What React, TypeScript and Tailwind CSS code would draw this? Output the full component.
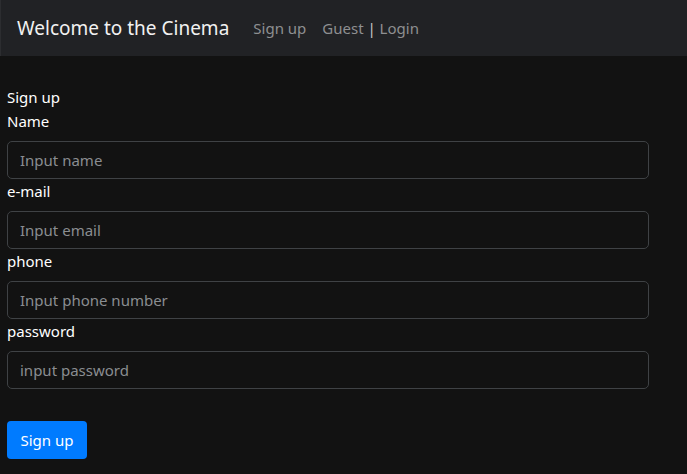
export default function App() {
  const fields = [
    { label: "Name", placeholder: "Input name", type: "text" },
    { label: "e-mail", placeholder: "Input email", type: "email" },
    { label: "phone", placeholder: "Input phone number", type: "tel" },
    { label: "password", placeholder: "input password", type: "password" },
  ];

  return (
    <div className="min-h-[474px] bg-[#121212] text-white font-['Segoe_UI','Noto_Sans',sans-serif] text-[15px] leading-6">
      <nav className="h-14 bg-[#212225] border-l border-[#2c2d30] flex items-center pl-4">
        <span className="text-[19px] leading-[30px] text-[#f1f1f1] mr-4">Welcome to the Cinema</span>
        <a className="px-2 text-[#8e8f91]">Sign up</a>
        <a className="px-2 text-[#8e8f91]">
          Guest <span className="text-[#c8c8c8]">|</span> Login
        </a>
      </nav>

      <form className="pt-[29px] pl-[7px] w-[649px]">
        <div>Sign up</div>
        {fields.map((f) => (
          <div key={f.label}>
            <label className="block mb-2">{f.label}</label>
            <input
              type={f.type}
              placeholder={f.placeholder}
              className="block w-full h-[38px] px-3 bg-[#121212] border border-[#3f4245] rounded-[5px] text-white placeholder:text-[#8a8d91] outline-none"
            />
          </div>
        ))}
        <button
          type="button"
          className="mt-8 h-[38px] w-20 bg-[#007bff] rounded-[4px] text-white"
        >
          Sign up
        </button>
      </form>
    </div>
  );
}
